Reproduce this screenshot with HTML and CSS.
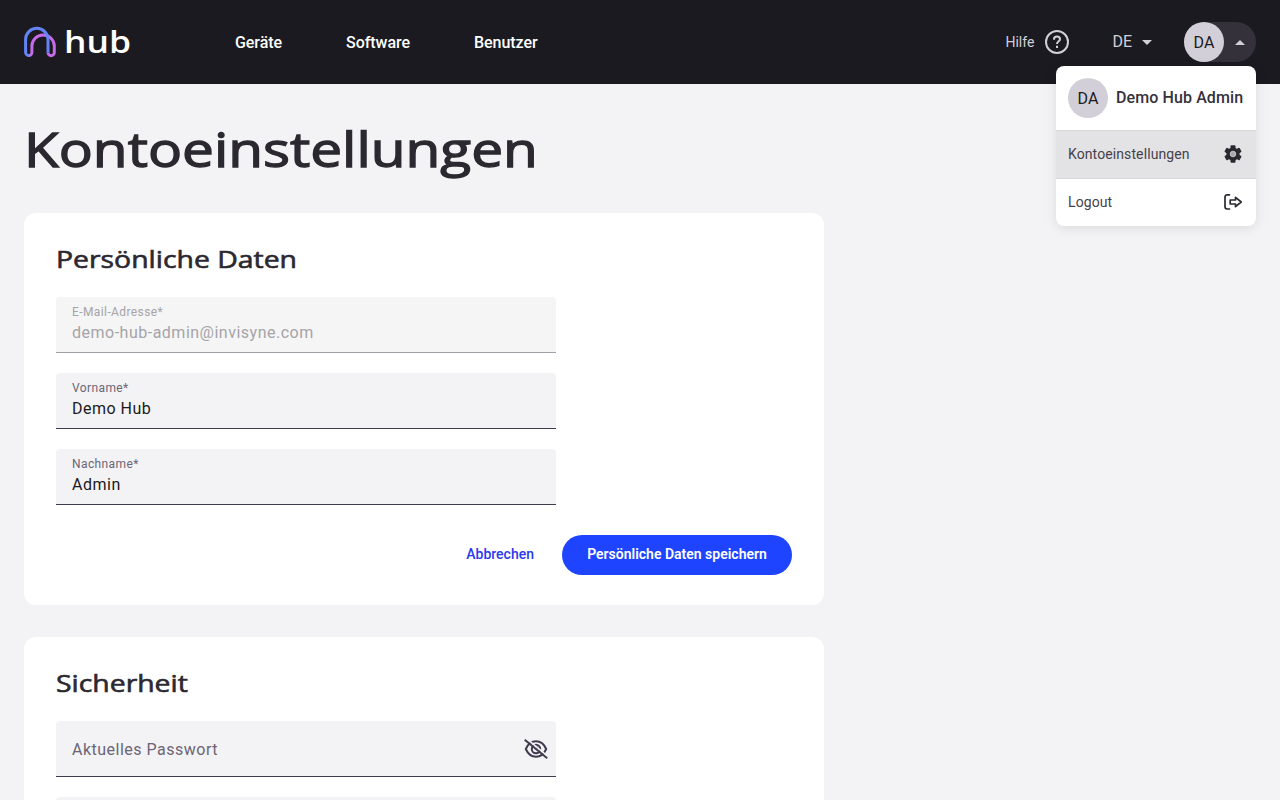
FILE: index.html
```html
<!DOCTYPE html>
<html lang="de">
<head>
    <meta charset="UTF-8">
    <meta name="viewport" content="width=device-width, initial-scale=1.0">
    <title>Kontoeinstellungen</title>
    <link rel="stylesheet" href="styles.css">
</head>
<body>
    <header class="header">
        <a class="logo" href="#">
            <svg width="32" height="32" viewBox="0 0 32 32" fill="none" stroke-width="3">
                <path d="M4.7 29.6 a3.1 3.1 0 0 0 3.2 -3.1 V20 a11.2 11 0 0 1 22.4 0 V26.5 a3.1 3.1 0 0 1 -6.3 0" stroke="#c66be8"/>
                <path d="M5 29.6 a3.3 3.3 0 0 1 -3.4 -3.1 V13.5 a11.2 11.2 0 0 1 22.4 0 V26.5" stroke="#6484f5"/>
            </svg>
            <span class="logo-text">hub</span>
        </a>
        <nav class="nav">
            <a href="#">Geräte</a>
            <a href="#">Software</a>
            <a href="#">Benutzer</a>
        </nav>
        <div class="tools">
            <a class="help" href="#">
                <span>Hilfe</span>
                <svg width="24" height="24" viewBox="0 0 24 24" fill="none" stroke="#d3cfd8" stroke-width="2">
                    <circle cx="12" cy="12" r="11"/>
                    <path d="M9 9.7 V9.2 a3 2.7 0 0 1 6 0 c0 2.2 -3 2.1 -3 4.8"/>
                    <path d="M12 15.8 v2.2"/>
                </svg>
            </a>
            <button class="lang"><span>DE</span><span class="arrow-down"></span></button>
            <div class="account">
                <button class="account-button">
                    <span class="avatar">DA</span>
                    <span class="arrow-up"></span>
                </button>
                <div class="menu">
                    <div class="menu-user">
                        <span class="avatar">DA</span>
                        <span class="menu-name">Demo Hub Admin</span>
                    </div>
                    <a class="menu-item active" href="#">
                        <span>Kontoeinstellungen</span>
                        <svg width="20" height="20" viewBox="0 0 20 20">
                            <g fill="#2b2830">
                                <circle cx="10" cy="10" r="6.6"/>
                                <rect x="7.5" y="1.3" width="5" height="17.4" rx="1"/>
                                <rect x="7.5" y="1.3" width="5" height="17.4" rx="1" transform="rotate(60 10 10)"/>
                                <rect x="7.5" y="1.3" width="5" height="17.4" rx="1" transform="rotate(120 10 10)"/>
                            </g>
                            <circle cx="10" cy="10" r="2.8" fill="#aaa9ad" stroke="#d3d2d5" stroke-width="0.8"/>
                        </svg>
                    </a>
                    <a class="menu-item" href="#">
                        <span>Logout</span>
                        <svg width="20" height="20" viewBox="0 0 20 20" fill="none" stroke="#2b2830" stroke-width="1.7" stroke-linejoin="round" stroke-linecap="round">
                            <path d="M6.5 2.8 H4.2 a2.2 2.2 0 0 0 -2.2 2.2 V14.8 a2.2 2.2 0 0 0 2.2 2.2 H6.5"/>
                            <path d="M7.2 8 H12.5 V5.3 L18.2 10 L12.5 14.7 V12 H7.2 Z"/>
                        </svg>
                    </a>
                </div>
            </div>
        </div>
    </header>

    <main class="main">
        <h1><span class="wide">Kontoeinstellungen</span></h1>

        <section class="card">
            <h2><span class="wide">Persönliche Daten</span></h2>
            <div class="fields">
                <div class="field disabled">
                    <label>E-Mail-Adresse*</label>
                    <div class="value">demo-hub-admin@invisyne.com</div>
                </div>
                <div class="field">
                    <label>Vorname*</label>
                    <div class="value">Demo Hub</div>
                </div>
                <div class="field">
                    <label>Nachname*</label>
                    <div class="value">Admin</div>
                </div>
            </div>
            <div class="actions">
                <button class="cancel">Abbrechen</button>
                <button class="save">Persönliche Daten speichern</button>
            </div>
        </section>

        <section class="card">
            <h2><span class="wide">Sicherheit</span></h2>
            <div class="fields">
                <div class="field empty">
                    <label>Aktuelles Passwort</label>
                    <svg width="24" height="24" viewBox="0 0 24 24" fill="none" stroke="#423b50" stroke-width="2">
                        <path d="M1.8 12 C4 7 7.5 4.3 12 4.3 S20 7 22.2 12 C20 17 16.5 19.7 12 19.7 S4 17 1.8 12 Z"/>
                        <circle cx="12" cy="12" r="4.2"/>
                        <path d="M12 10 a2 2 0 0 1 2 2"/>
                        <path d="M2 1.2 L24 19.6" stroke="#f3f3f6" stroke-width="1.5"/>
                        <path d="M0.7 2.7 L23.2 21.3"/>
                    </svg>
                </div>
                <div class="field empty"></div>
            </div>
        </section>
    </main>
</body>
</html>
```
FILE: styles.css
```css
* {
    box-sizing: border-box;
}
body {
    margin: 0;
    height: 800px;
    overflow: hidden;
    background-color: #f3f3f6;
    color: #2b2830;
    font-family: Roboto, sans-serif;
}
a {
    color: inherit;
    text-decoration: none;
}
button {
    padding: 0;
    border: none;
    background: none;
    font-family: inherit;
    cursor: pointer;
}
.header {
    display: flex;
    align-items: center;
    height: 84px;
    padding: 0 24px;
    background-color: #1a1a20;
}
.logo {
    display: flex;
    align-items: center;
    gap: 8px;
    width: 211px;
    color: white;
}
.logo-text {
    font-family: "Open Sans", sans-serif;
    font-size: 30px;
    font-weight: 600;
    line-height: 36px;
    transform: scaleX(1.18);
    transform-origin: left;
}
.nav {
    display: flex;
    gap: 64px;
    color: white;
    font-size: 16px;
    font-weight: 500;
    letter-spacing: -0.05px;
}
.tools {
    display: flex;
    align-items: center;
    margin-left: auto;
    color: #d3cfd8;
}
.help {
    display: flex;
    align-items: center;
    gap: 11px;
    margin-right: 43px;
    font-size: 14px;
}
.lang {
    display: flex;
    align-items: center;
    gap: 10px;
    margin-right: 32px;
    color: #d3cfd8;
    font-size: 16px;
}
.lang span:first-child {
    padding-bottom: 2px;
}
.arrow-down,
.arrow-up {
    border: 5px solid transparent;
}
.arrow-down {
    border-top-color: #d3cfd8;
    border-bottom: none;
}
.arrow-up {
    border-bottom-color: #d3cfd8;
    border-top: none;
}
.account {
    position: relative;
}
.account-button {
    display: flex;
    align-items: center;
    gap: 11px;
    width: 72px;
    height: 40px;
    border-radius: 20px;
    background-color: #35313b;
}
.avatar {
    width: 40px;
    height: 40px;
    border-radius: 50%;
    background-color: #d3cfd8;
    color: #1a1a20;
    font-size: 16px;
    line-height: 42px;
    text-align: center;
}
.menu {
    position: absolute;
    top: 44px;
    right: 0;
    width: 200px;
    height: 160px;
    border-radius: 8px;
    overflow: hidden;
    background-color: white;
    box-shadow: 0 2px 12px rgba(0, 0, 0, 0.1);
    color: #35313b;
}
.menu-user {
    display: flex;
    align-items: center;
    gap: 8px;
    height: 64px;
    padding: 0 12px;
}
.menu-name {
    padding-bottom: 2px;
    font-size: 16px;
    font-weight: 500;
    letter-spacing: 0.1px;
    white-space: nowrap;
}
.menu-item {
    display: flex;
    align-items: center;
    justify-content: space-between;
    height: 48px;
    padding: 0 13px 2px 12px;
    color: #45414b;
    font-size: 14px;
    letter-spacing: 0.1px;
}
.menu-item.active {
    height: 49px;
    border: 1px solid #d8d7db;
    border-width: 1px 0;
    background-color: #e3e3e5;
}
.main {
    padding: 0 24px;
}
h1,
h2 {
    margin: 0;
    font-family: "Open Sans", sans-serif;
    font-weight: 400;
}
h1 {
    height: 129px;
    padding-top: 33px;
    font-size: 48px;
    line-height: 64px;
    -webkit-text-stroke: 1.3px #2b2830;
}
h2 {
    height: 32px;
    margin-bottom: 20px;
    font-size: 24px;
    line-height: 28px;
    -webkit-text-stroke: 0.6px #2b2830;
}
.wide {
    display: inline-block;
    transform: scaleX(1.182);
    transform-origin: left;
}
.card {
    width: 800px;
    margin-bottom: 32px;
    padding: 32px 32px 30px;
    border-radius: 12px;
    background-color: white;
}
.fields {
    display: flex;
    flex-direction: column;
    gap: 20px;
    width: 500px;
}
.field {
    height: 56px;
    padding: 7px 16px 0;
    border-bottom: 1px solid #423b50;
    border-radius: 4px 4px 0 0;
    background-color: #f3f3f6;
}
.field label {
    display: block;
    color: #6b6574;
    font-size: 12px;
    line-height: 16px;
    letter-spacing: 0.4px;
}
.value {
    color: #1a1a20;
    font-size: 16px;
    line-height: 26px;
    letter-spacing: 0.5px;
}
.field.disabled {
    border-color: #a09fa5;
    background-color: #f5f5f5;
}
.disabled label,
.disabled .value {
    color: #a5a4a8;
}
.field.empty {
    display: flex;
    align-items: center;
    justify-content: space-between;
    padding: 0 8px 0 16px;
}
.empty label {
    padding-top: 2px;
    font-size: 16px;
    line-height: 24px;
    letter-spacing: 0.5px;
}
.actions {
    display: flex;
    align-items: center;
    justify-content: flex-end;
    gap: 28px;
    margin-top: 30px;
}
.cancel,
.save {
    height: 40px;
    padding-bottom: 2px;
    font-size: 14px;
    font-weight: 500;
}
.cancel {
    color: #2b39ed;
}
.save {
    width: 230px;
    border-radius: 20px;
    background-color: #1e44ff;
    color: white;
    font-weight: 600;
}
```
